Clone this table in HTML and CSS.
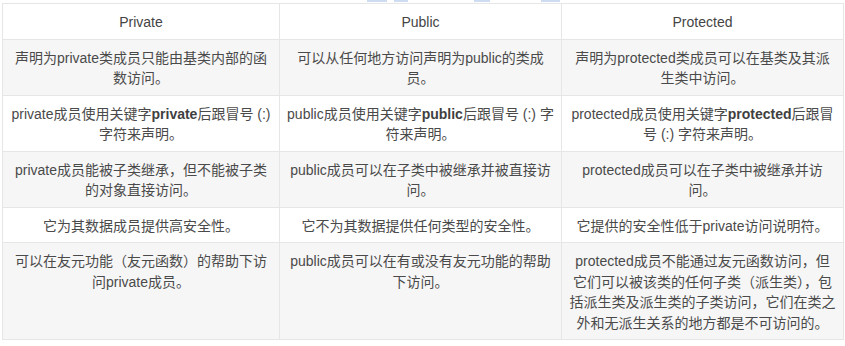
FILE: index.html
```html
<!DOCTYPE html>
<html lang="zh">
<head>
<meta charset="utf-8">
<link rel="stylesheet" href="styles.css">
</head>
<body>
<div class="strip"><span class="s1"></span><span class="s2"></span><span class="s3"></span><span class="s4"></span></div>
<table class="cmp">
<colgroup><col class="c1"><col class="c2"><col class="c3"></colgroup>
<thead>
<tr><th>Private</th><th>Public</th><th>Protected</th></tr>
</thead>
<tbody>
<tr class="alt"><td>声明为private类成员只能由基类内部的函<br>数访问。</td><td>可以从任何地方访问声明为public的类成<br>员。</td><td>声明为protected类成员可以在基类及其派<br>生类中访问。</td></tr>
<tr><td>private成员使用关键字<b>private</b>后跟冒号 (:)<br>字符来声明。</td><td>public成员使用关键字<b>public</b>后跟冒号 (:) 字<br>符来声明。</td><td>protected成员使用关键字<b>protected</b>后跟冒<br>号 (:) 字符来声明。</td></tr>
<tr class="alt"><td>private成员能被子类继承，但不能被子类<br>的对象直接访问。</td><td>public成员可以在子类中被继承并被直接访<br>问。</td><td>protected成员可以在子类中被继承并访<br>问。</td></tr>
<tr><td>它为其数据成员提供高安全性。</td><td>它不为其数据提供任何类型的安全性。</td><td>它提供的安全性低于private访问说明符。</td></tr>
<tr class="alt"><td>可以在友元功能（友元函数）的帮助下访<br>问private成员。</td><td>public成员可以在有或没有友元功能的帮助<br>下访问。</td><td>protected成员不能通过友元函数访问，但<br>它们可以被该类的任何子类（派生类），包<br>括派生类及派生类的子类访问，它们在类之<br>外和无派生关系的地方都是不可访问的。</td></tr>
</tbody>
</table>
</body>
</html>
```
FILE: styles.css
```css
html, body {
  margin: 0;
  padding: 0;
  background: #fff;
}
body {
  font-family: "Liberation Sans", "Noto Sans CJK SC", sans-serif;
  font-size: 14px;
  color: #4a4a4a;
}
.strip {
  display: flex;
  height: 2px;
}
.strip span {
  display: block;
  height: 2px;
  background: #cddcf0;
}
.s1 { margin-left: 367px; width: 20px; }
.s2 { margin-left: 7px; width: 14px; }
.s3 { margin-left: 66px; width: 16px; }
.s4 { margin-left: 51px; width: 19px; }
.cmp {
  margin: 1px 2px 0 2px;
  width: 841px;
  border-collapse: collapse;
  table-layout: fixed;
}
.c1 { width: 277px; }
.c2 { width: 282px; }
.c3 { width: 282px; }
.cmp th, .cmp td {
  border: 1px solid #e6e6e6;
  padding: 8px 4px 6px;
  line-height: 20.5px;
  text-align: center;
  vertical-align: top;
  font-weight: normal;
  white-space: nowrap;
}
.cmp th {
  color: #444;
  background: #fff;
}
.cmp tr.alt td {
  background: #f6f6f6;
}
.cmp b {
  font-weight: bold;
  color: #3f3f3f;
}
```
